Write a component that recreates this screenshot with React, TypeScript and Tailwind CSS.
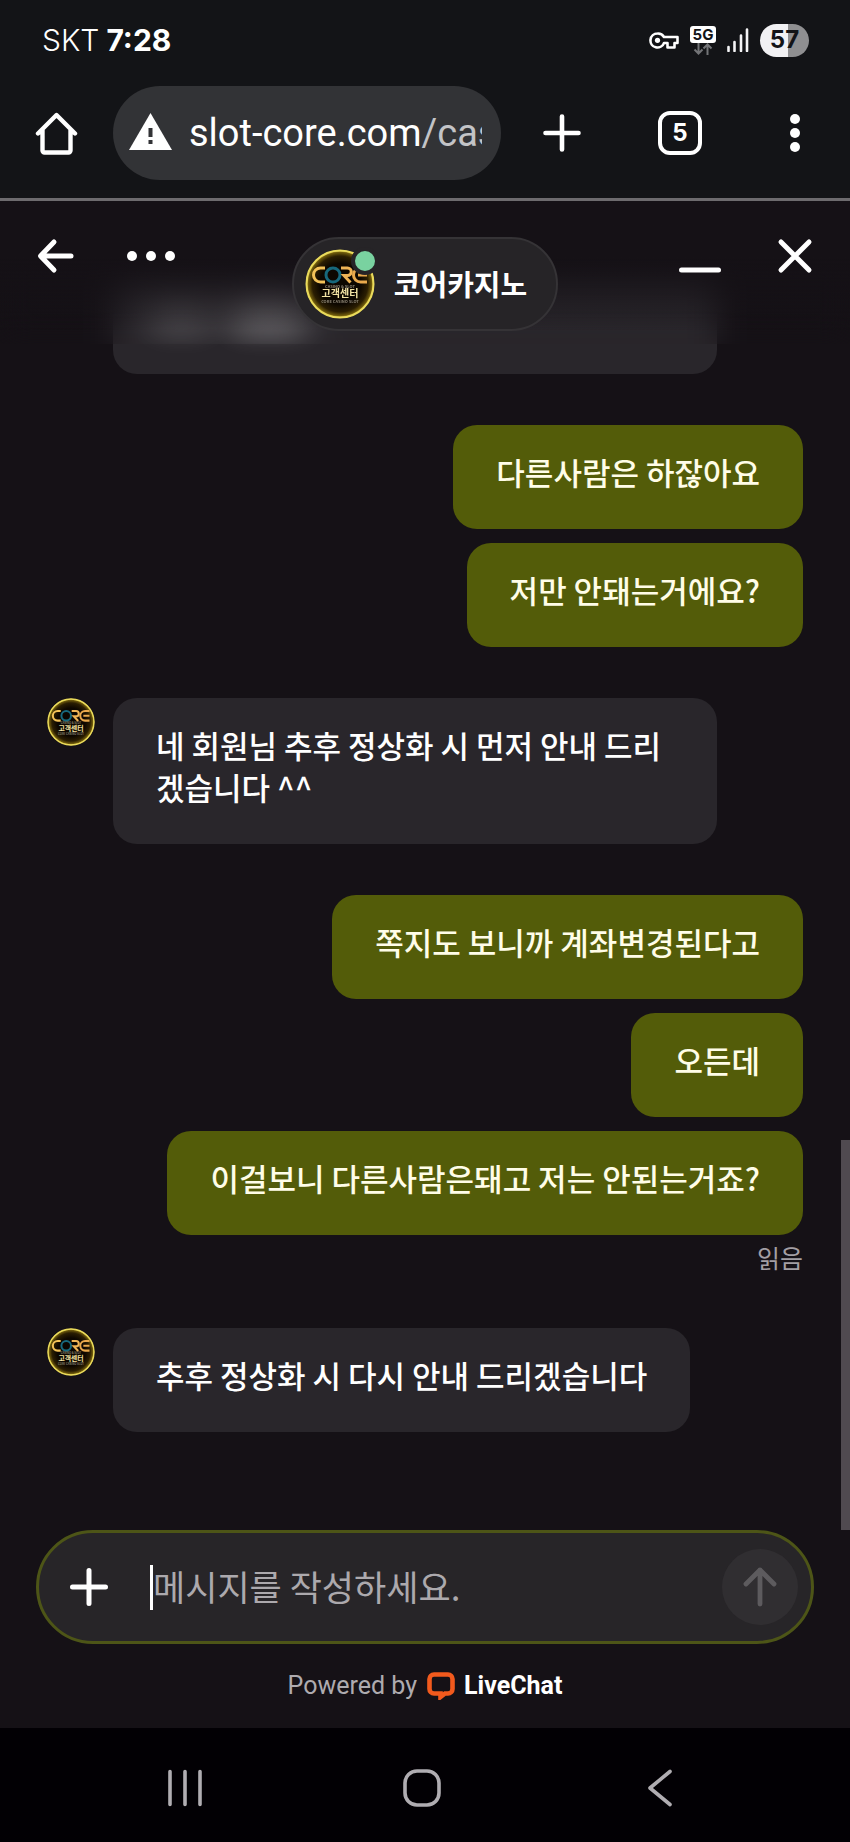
import type { ReactNode } from 'react';

type Group = {
  from: 'agent' | 'me';
  messages: string[];
  status?: string;
};

const groups: Group[] = [
  { from: 'me', messages: ['다른사람은 하잖아요', '저만 안돼는거에요?'] },
  {
    from: 'agent',
    messages: ['네 회원님 추후 정상화 시 먼저 안내 드리겠습니다 ^^'],
  },
  {
    from: 'me',
    messages: [
      '쪽지도 보니까 계좌변경된다고',
      '오든데',
      '이걸보니 다른사람은돼고 저는 안된는거죠?',
    ],
    status: '읽음',
  },
  { from: 'agent', messages: ['추후 정상화 시 다시 안내 드리겠습니다'] },
];

function Avatar({ className, id }: { className: string; id: string }) {
  return (
    <svg viewBox="0 0 70 70" className={className} role="img" aria-label="CORE">
      <defs>
        <radialGradient id={id}>
          <stop offset="0.6" stopColor="#0d0700" />
          <stop offset="0.82" stopColor="#2b1e02" />
          <stop offset="0.93" stopColor="#6e5a0c" />
          <stop offset="1" stopColor="#e6c93a" />
        </radialGradient>
      </defs>
      <circle cx="35" cy="35" r="34" fill={`url(#${id})`} />
      <circle
        cx="35"
        cy="35"
        r="33.5"
        fill="none"
        stroke="#eadb5c"
        strokeWidth="2"
      />
      <g fill="none" strokeWidth="3">
        <path d="M20 19h-4.500a7 7 0 0 0 0 14H20" stroke="#f3c258" />
        <circle cx="28" cy="26" r="7" stroke="#17687c" />
        <path d="M36 19h6.500a3.800 3.800 0 0 1 0 7.600H39l6.500 7" stroke="#efb455" />
        <path d="M62 19h-6.500a7 7 0 0 0 0 14H62M53 26h9" stroke="#e9a94c" />
      </g>
      <g
        textAnchor="middle"
        fontFamily="'Noto Sans CJK KR', sans-serif"
        fontWeight="700"
      >
        <text x="35" y="38.500" fontSize="4" fill="#8a8271">
          CASINO &amp; SLOT
        </text>
        <text x="35" y="48" fontSize="10" fill="#f4e4a4">
          고객센터
        </text>
        <text x="35" y="53.500" fontSize="4" fill="#8a8271">
          CORE CASINO SLOT
        </text>
      </g>
    </svg>
  );
}

function StatusBar() {
  return (
    <div className="flex h-20 items-center justify-between pr-[41px] pl-[42px]">
      <p className="flex items-center gap-[7px] text-[30px] leading-10">
        <span className="font-light">SKT</span>
        <span className="font-bold">7:28</span>
      </p>
      <div className="flex items-center gap-[11px]">
        <svg viewBox="0 0 30 17" className="h-[17px] w-[30px]" aria-label="VPN">
          <path
            d="M8.500 1.500a7 7 0 1 0 6.500 9.500h3.500v4.500h7V11h3V5H15a7 7 0 0 0-6.500-3.500z"
            fill="none"
            stroke="#fff"
            strokeWidth="2.600"
            strokeLinejoin="round"
          />
          <circle cx="8.500" cy="8.300" r="2.600" fill="#fff" />
        </svg>
        <div className="flex w-[26px] flex-col items-center">
          <span className="w-full rounded-[3px] bg-white text-center text-[15px] leading-[17px] font-bold text-[#131417]">
            5G
          </span>
          <svg viewBox="0 0 20 12" className="h-3 w-5">
            <path
              d="M5.500 0v10M1.500 6.500l4 4 4-4M14.500 12V2M10.500 5.500l4-4 4 4"
              fill="none"
              stroke="#737477"
              strokeWidth="2"
            />
          </svg>
        </div>
        <svg viewBox="0 0 22 24" className="h-6 w-[22px]" aria-label="신호">
          <path
            d="M1.500 19v4M7.500 14v9M14 7.500V23M20 1.500V23"
            stroke="#f4f4f6"
            strokeWidth="2.600"
            strokeLinecap="round"
          />
        </svg>
        <span className="flex h-[33px] w-[49px] items-center justify-center rounded-full bg-linear-to-r from-[#f1f1f3] from-57% to-[#8f8f91] to-57% text-[24px] leading-8 font-bold text-[#131417]">
          57
        </span>
      </div>
    </div>
  );
}

function BrowserBar() {
  return (
    <div className="flex items-center pt-[6px] pr-9 pb-[18px] pl-[34px]">
      <button aria-label="홈" className="mr-[35px]">
        <svg viewBox="0 0 44 44" className="h-11 w-11">
          <path
            d="M4 22.500 22.500 4 41 22.500M8.500 19v20.500a2 2 0 0 0 2 2h24a2 2 0 0 0 2-2V19"
            fill="none"
            stroke="#fff"
            strokeWidth="4.400"
            strokeLinejoin="round"
            strokeLinecap="round"
          />
        </svg>
      </button>
      <button className="mr-[39px] flex h-[94px] min-w-0 flex-1 items-center gap-[17px] rounded-full bg-[#323336] pr-[19px] pl-4">
        <svg viewBox="0 0 43 37" className="mb-1 h-[37px] w-[43px] shrink-0">
          <path d="M21.500 0 43 37H0z" fill="#fff" />
          <path d="M21.500 15v9M21.500 27v4" stroke="#323336" strokeWidth="4" />
        </svg>
        <span className="min-w-0 flex-1 overflow-hidden text-left font-[Roboto,sans-serif] text-[38px] leading-[50px] whitespace-nowrap">
          slot-core.com<span className="text-[#c3c4c7]">/cas</span>
        </span>
      </button>
      <div className="flex items-center gap-[74px]">
        <button aria-label="새 탭">
          <svg viewBox="0 0 44 44" className="h-11 w-11">
            <path
              d="M22 5.500v33M5.500 22h33"
              stroke="#fff"
              strokeWidth="4.600"
              strokeLinecap="round"
            />
          </svg>
        </button>
        <button
          aria-label="탭 5개"
          className="flex h-11 w-11 items-center justify-center rounded-xl border-4 border-white text-[24px] leading-6 font-bold"
        >
          5
        </button>
        <button aria-label="메뉴">
          <svg viewBox="0 0 38 38" className="h-[38px] w-[38px]" fill="#fff">
            <circle cx="19" cy="5" r="5" />
            <circle cx="19" cy="19" r="5" />
            <circle cx="19" cy="33" r="5" />
          </svg>
        </button>
      </div>
    </div>
  );
}

function HeaderButton({
  label,
  d,
  className = 'w-[38px]',
  viewBox = '0 0 38 38',
}: {
  label: string;
  d: string;
  className?: string;
  viewBox?: string;
}) {
  return (
    <button aria-label={label}>
      <svg viewBox={viewBox} className={`h-[38px] ${className}`}>
        <path
          d={d}
          fill="none"
          stroke="#fff"
          strokeWidth="5"
          strokeLinecap="round"
          strokeLinejoin="round"
        />
      </svg>
    </button>
  );
}

function ChatHeader() {
  return (
    <header className="absolute inset-x-0 top-0 grid h-[143px] grid-cols-[1fr_auto_1fr] items-start bg-linear-to-b from-[#151116] from-40% to-transparent to-90% px-9 pt-9 backdrop-blur-lg">
      <div className="flex gap-[53px]">
        <HeaderButton label="뒤로" d="M35 19H5M18 5 4.500 19 18 33" />
        <button aria-label="더보기">
          <svg viewBox="0 0 48 38" className="h-[38px] w-12" fill="#fff">
            <circle cx="5" cy="19" r="5" />
            <circle cx="24" cy="19" r="5" />
            <circle cx="43" cy="19" r="5" />
          </svg>
        </button>
      </div>
      <div className="flex h-[94px] items-center gap-[19px] rounded-full border-2 border-[#353336] bg-[#262427] pr-[29px] pl-[11px]">
        <div className="relative">
          <Avatar id="header-glow" className="h-[70px] w-[70px]" />
          <span className="absolute -top-[2px] -right-[4px] h-7 w-7 rounded-full border-4 border-[#262427] bg-[#79d2a0]" />
        </div>
        <h1 className="pb-[2px] text-[29px] leading-10 font-bold">코어카지노</h1>
      </div>
      <div className="flex justify-end gap-[54px]">
        <HeaderButton
          label="최소화"
          d="M3.500 33h37"
          className="w-11"
          viewBox="0 0 44 38"
        />
        <HeaderButton label="닫기" d="M5 5l28 28M33 5 5 33" />
      </div>
    </header>
  );
}

function Bubble({ mine, children }: { mine: boolean; children: ReactNode }) {
  return (
    <p
      className={`rounded-3xl px-[43px] pt-[26px] pb-9 text-[31px] leading-[42px] font-medium ${
        mine
          ? 'max-w-[680px] bg-[#535c09] text-[#fffde8]'
          : 'max-w-[604px] bg-[#29262b]'
      }`}
    >
      {children}
    </p>
  );
}

function Messages() {
  return (
    <div className="flex flex-1 flex-col gap-[51px] pt-[65px] pr-[47px] pb-[98px] pl-[47px]">
      {/* older message scrolled under the header */}
      <div
        aria-hidden="true"
        className="ml-[66px] flex h-[108px] w-[604px] gap-4 rounded-3xl bg-[#29262b] pt-[34px] pl-[36px]"
      >
        <span className="h-8 w-16 rounded-full bg-white/20 blur-md" />
        <span className="h-8 w-20 rounded-full bg-white/35 blur-md" />
      </div>
      {groups.map((group, i) =>
        group.from === 'me' ? (
          <div key={i} className="flex flex-col items-end gap-[14px]">
            {group.messages.map((text) => (
              <Bubble key={text} mine>
                {text}
              </Bubble>
            ))}
            {group.status && (
              <p className="-mt-[9px] pb-[3px] text-[25px] leading-[34px] text-[#a39fa4]">
                {group.status}
              </p>
            )}
          </div>
        ) : (
          <div key={i} className="flex items-start gap-[18px]">
            <Avatar id={`glow-${i}`} className="h-12 w-12 shrink-0" />
            {group.messages.map((text) => (
              <Bubble key={text} mine={false}>
                {text}
              </Bubble>
            ))}
          </div>
        ),
      )}
    </div>
  );
}

function Composer() {
  return (
    <form className="mx-9 flex h-[114px] items-center rounded-full border-[3px] border-[#4d5517] bg-[#272528] pr-[13px] pl-[31px]">
      <button type="button" aria-label="첨부" className="mr-[42px]">
        <svg viewBox="0 0 38 38" className="h-[38px] w-[38px]">
          <path
            d="M19 2.500v33M2.500 19h33"
            stroke="#fff"
            strokeWidth="5"
            strokeLinecap="round"
          />
        </svg>
      </button>
      <span className="h-[45px] w-[3px] bg-white" />
      <input
        type="text"
        aria-label="메시지"
        placeholder="메시지를 작성하세요."
        className="h-[60px] min-w-0 flex-1 bg-transparent pb-[4px] text-[35px] leading-[50px] outline-none placeholder:text-[#aca9ad]"
      />
      <button
        type="button"
        aria-label="보내기"
        className="flex h-[76px] w-[76px] items-center justify-center rounded-full bg-[#302e31]"
      >
        <svg viewBox="0 0 38 42" className="h-[42px] w-[38px]">
          <path
            d="M19 38V4M5 18 19 4l14 14"
            fill="none"
            stroke="#5d5b5e"
            strokeWidth="4.800"
            strokeLinecap="round"
            strokeLinejoin="round"
          />
        </svg>
      </button>
    </form>
  );
}

function PoweredBy() {
  return (
    <div className="flex h-[84px] items-center justify-center font-[Roboto,sans-serif] text-[25px] leading-8">
      <span className="text-[#aeabaf]">Powered by</span>
      <a href="#livechat" className="ml-[10px] flex items-center gap-[9px] font-bold">
        <svg viewBox="0 0 28 28" className="h-7 w-7">
          <path
            d="M7 2.500h14a4.500 4.500 0 0 1 4.500 4.500v10a4.500 4.500 0 0 1-4.500 4.500h-3l-4.500 3.500v-3.500H7A4.500 4.500 0 0 1 2.500 17V7A4.500 4.500 0 0 1 7 2.500z"
            fill="none"
            stroke="#f25a1d"
            strokeWidth="4.600"
          />
        </svg>
        LiveChat
      </a>
    </div>
  );
}

function NavBar() {
  return (
    <nav className="flex h-[114px] items-center justify-center gap-[199px] bg-[#020004] pt-[5px] pr-[7px]">
      <button aria-label="최근 앱">
        <svg viewBox="0 0 38 38" className="h-[38px] w-[38px]">
          <path
            d="M4 2.500v33M19 2.500v33M34 2.500v33"
            stroke="#b0adb2"
            strokeWidth="3.600"
            strokeLinecap="round"
          />
        </svg>
      </button>
      <button aria-label="홈 화면">
        <svg viewBox="0 0 38 38" className="h-[38px] w-[38px]">
          <rect
            x="2"
            y="2"
            width="34"
            height="34"
            rx="12"
            fill="none"
            stroke="#b0adb2"
            strokeWidth="3.600"
          />
        </svg>
      </button>
      <button aria-label="이전">
        <svg viewBox="0 0 38 38" className="h-[38px] w-[38px]">
          <path
            d="M30 2.500 10 19l20 16.500"
            fill="none"
            stroke="#b0adb2"
            strokeWidth="3.600"
            strokeLinecap="round"
            strokeLinejoin="round"
          />
        </svg>
      </button>
    </nav>
  );
}

export default function App() {
  return (
    <div className="flex min-h-screen flex-col bg-[#151116] font-[Inter,'Noto_Sans_CJK_KR',sans-serif] text-white">
      <div className="bg-[#131417]">
        <StatusBar />
        <BrowserBar />
      </div>
      <main className="flex flex-1 flex-col border-t-[3px] border-[#6d6b6e] font-['Noto_Sans_CJK_KR',sans-serif]">
        <section className="relative flex flex-1 flex-col">
          <Messages />
          <ChatHeader />
          <span className="absolute right-0 bottom-0 h-[390px] w-[9px] bg-[#504a50]" />
        </section>
        <Composer />
        <PoweredBy />
      </main>
      <NavBar />
    </div>
  );
}
